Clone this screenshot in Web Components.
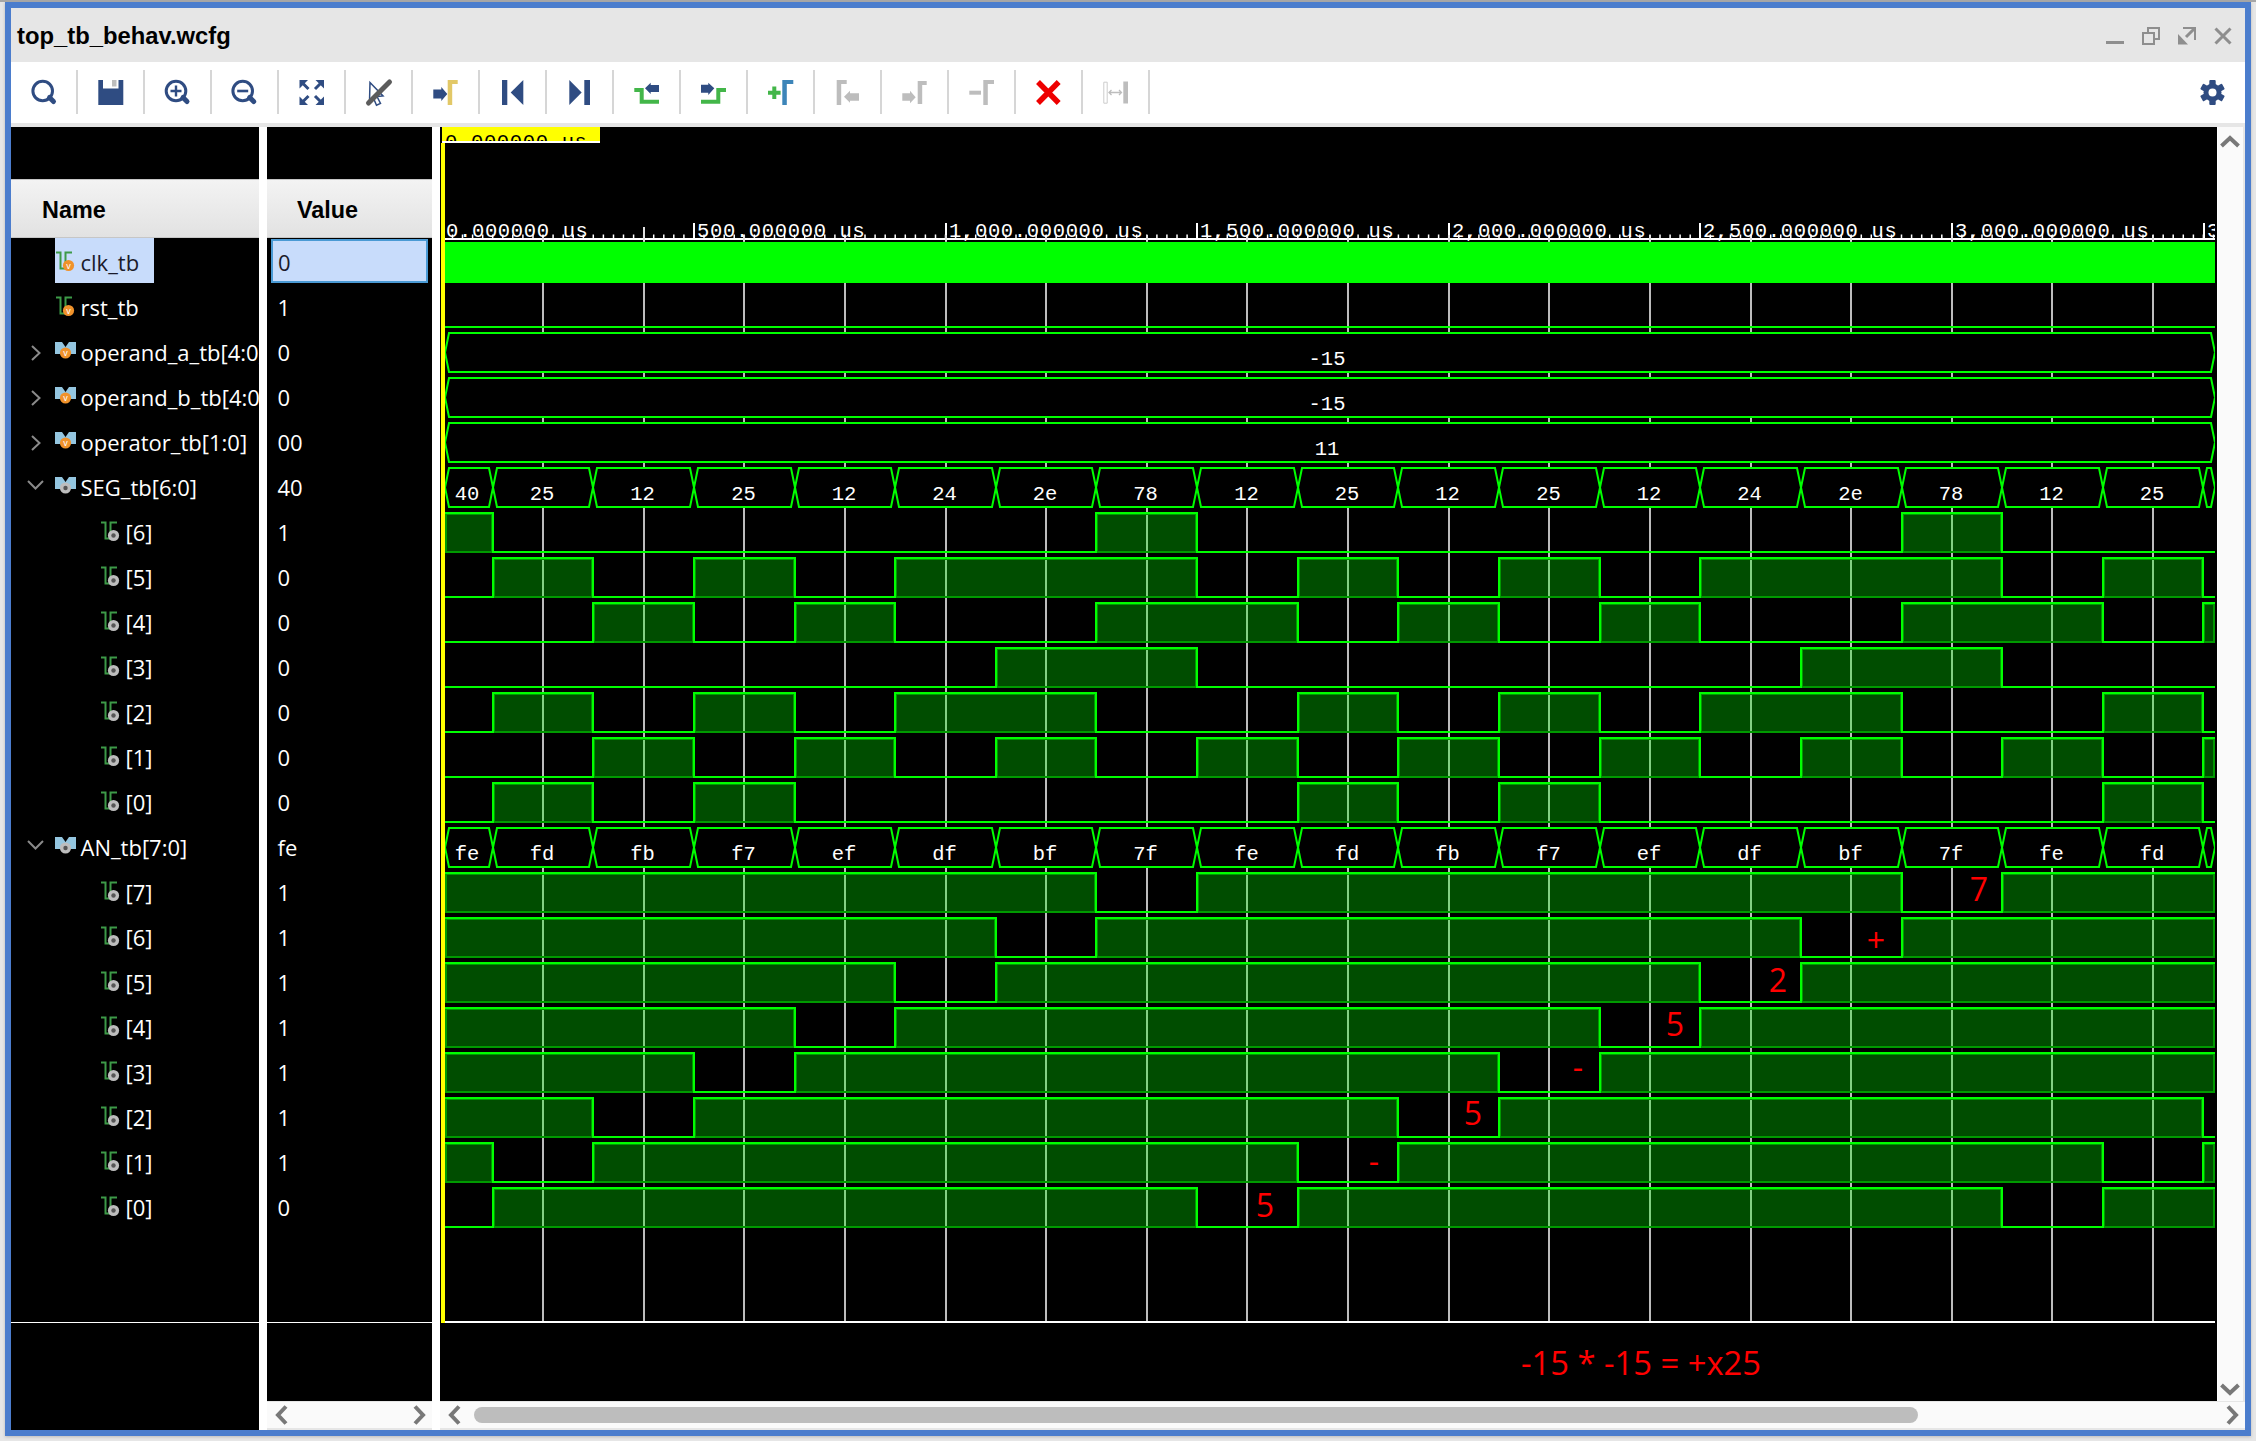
<!DOCTYPE html>
<html>
<head>
<meta charset="utf-8">
<title>top_tb_behav.wcfg</title>
<style>
    html, body { margin: 0; height: 1441px; overflow: hidden; }
    body { background: #e6e6e6; border-top: 2px solid #a6a6a6; box-sizing: border-box; }
</style>
</head>
<body>
<wave-window>
    <title-bar>top_tb_behav.wcfg</title-bar>
    <tool-bar></tool-bar>
    <wave-view>
        <name-panel></name-panel>
        <value-panel></value-panel>
        <wave-panel></wave-panel>
    </wave-view>
</wave-window>

<script>
//#region DATA
const NAVY = "#2f4c82"
const GREEN = "#43b649"
const GOLD = "#e2c867"
const BLUE = "#3d85b9"
const GREY = "#bdbdbd"

const gamma = (x, y, w, h, color) =>
    `<path d="M${x} ${y}h${w}v4h-${w - 4.500}v${h - 4}h-4.500z" fill="${color}"/>`

const TOOL_ICONS = [
    `<circle cx="32.700" cy="21" r="9.800" fill="none" stroke="${NAVY}" stroke-width="3"/><path d="M39.500 27.500l4 4" stroke="${NAVY}" stroke-width="5" stroke-linecap="round"/>`,
    `<path d="M21.300 10h25v25h-25z" fill="${NAVY}"/><path d="M26 10h15.500v8.500h-15.500z" fill="#fff"/><path d="M35 10h4.500v6.500h-4.500z" fill="${GREY}"/>`,
    `<circle cx="32" cy="21" r="9.800" fill="none" stroke="${NAVY}" stroke-width="3"/><path d="M39 27.500l4 4" stroke="${NAVY}" stroke-width="5" stroke-linecap="round"/><path d="M26.500 21h11M32 15.500v11" stroke="${NAVY}" stroke-width="2.400"/>`,
    `<circle cx="31.700" cy="21" r="9.800" fill="none" stroke="${NAVY}" stroke-width="3"/><path d="M38.700 27.500l4 4" stroke="${NAVY}" stroke-width="5" stroke-linecap="round"/><path d="M26.200 21h11" stroke="${NAVY}" stroke-width="2.600"/>`,
    `<g fill="${NAVY}"><path d="M21.500 10h8.500l-8.500 8.500z"/><path d="M46 10h-8.500l8.500 8.500z"/><path d="M21.500 35h8.500l-8.500-8.500z"/><path d="M46 35h-8.500l8.500-8.500z"/></g><path d="M24 12.500l6.500 6.500M43.500 12.500l-6.500 6.500M24 32.500l6.500-6.500M43.500 32.500l-6.500-6.500" stroke="${NAVY}" stroke-width="3"/>`,
    `<path d="M25 12.500l13 13.500-6 .5 3.500 7-4 1.800-3-7-4 3.500z" fill="#fff" stroke="${NAVY}" stroke-width="1.500"/><path d="M44.500 12l-21 21" stroke="#5c5c5c" stroke-width="5" stroke-linecap="round"/>`,
    `<path d="M21.300 19.500h8v-2.500l6 7-6 7v-2.500h-8z" fill="${NAVY}"/>` + gamma(35.700, 10, 10, 25, GOLD),
    `<path d="M23 10h5.300v25h-5.300z" fill="${NAVY}"/><path d="M44.300 10l-12.600 12.400 12.600 12.600z" fill="${NAVY}"/>`,
    `<path d="M23.300 10l12.400 12.400-12.400 12.600z" fill="${NAVY}"/><path d="M38.300 10h5.700v25h-5.700z" fill="${NAVY}"/>`,
    `<path d="M21.300 20h7.400v11.700h17.300" fill="none" stroke="${GREEN}" stroke-width="4"/><path d="M32 18.300l5.700-5.600v2.300h8.300v7h-8.300v2z" fill="${NAVY}"/>`,
    `<path d="M21 31.700h17.300v-11.700h7.700" fill="none" stroke="${GREEN}" stroke-width="4"/><path d="M21 14.700h7.300v-2l6 5.600-6 6.700v-2.300h-7.300z" fill="${NAVY}"/>`,
    `<path d="M27.300 16.500v12.500M21 22.700h12.600" stroke="${GREEN}" stroke-width="4"/>` + gamma(35.300, 10, 11, 25, BLUE),
    gamma(22.700, 10, 10, 25, GREY) + `<path d="M30 26.700l6-6v2.600h9v7.400h-9v2z" fill="${GREY}"/>`,
    `<path d="M21.300 23.300h7.700v-2.600l5.700 6.600-5.700 6v-2.600h-7.700z" fill="${GREY}"/>` + gamma(36.700, 11, 9, 23, GREY),
    `<path d="M21.300 20.700h11.700v4h-11.700z" fill="${GREY}"/>` + gamma(35.300, 10, 10.700, 25, GREY),
    `<path d="M23 12l20.700 21M43.700 12l-20.700 21" stroke="#ee0000" stroke-width="5.500"/>`,
    `<path d="M21.800 12.200h3.400v21h-3.400z" fill="none" stroke="#cccccc" stroke-width="1"/><path d="M41.300 11.500h4.700v22h-4.700z" fill="${GREY}"/><path d="M27 22.500h12.500M29.500 20l-2.500 2.500 2.500 2.500M37 20l2.500 2.500-2.500 2.500" fill="none" stroke="${GREY}" stroke-width="1.300"/>`
]

const SIGNALS = [
    { name: "clk_tb", kind: "wire", dot: "orange", depth: 0, value: "0", selected: true },
    { name: "rst_tb", kind: "wire", dot: "orange", depth: 0, value: "1" },
    { name: "operand_a_tb[4:0]", kind: "bus", dot: "orange", depth: 0, value: "0", arrow: "right" },
    { name: "operand_b_tb[4:0]", kind: "bus", dot: "orange", depth: 0, value: "0", arrow: "right" },
    { name: "operator_tb[1:0]", kind: "bus", dot: "orange", depth: 0, value: "00", arrow: "right" },
    { name: "SEG_tb[6:0]", kind: "bus", dot: "grey", depth: 0, value: "40", arrow: "down" },
    { name: "[6]", kind: "wire", dot: "grey", depth: 1, value: "1" },
    { name: "[5]", kind: "wire", dot: "grey", depth: 1, value: "0" },
    { name: "[4]", kind: "wire", dot: "grey", depth: 1, value: "0" },
    { name: "[3]", kind: "wire", dot: "grey", depth: 1, value: "0" },
    { name: "[2]", kind: "wire", dot: "grey", depth: 1, value: "0" },
    { name: "[1]", kind: "wire", dot: "grey", depth: 1, value: "0" },
    { name: "[0]", kind: "wire", dot: "grey", depth: 1, value: "0" },
    { name: "AN_tb[7:0]", kind: "bus", dot: "grey", depth: 0, value: "fe", arrow: "down" },
    { name: "[7]", kind: "wire", dot: "grey", depth: 1, value: "1" },
    { name: "[6]", kind: "wire", dot: "grey", depth: 1, value: "1" },
    { name: "[5]", kind: "wire", dot: "grey", depth: 1, value: "1" },
    { name: "[4]", kind: "wire", dot: "grey", depth: 1, value: "1" },
    { name: "[3]", kind: "wire", dot: "grey", depth: 1, value: "1" },
    { name: "[2]", kind: "wire", dot: "grey", depth: 1, value: "1" },
    { name: "[1]", kind: "wire", dot: "grey", depth: 1, value: "1" },
    { name: "[0]", kind: "wire", dot: "grey", depth: 1, value: "0" }
]

const SEG_VALUES = ["40", "25", "12", "25", "12", "24", "2e", "78", "12", "25", "12", "25", "12", "24", "2e", "78", "12", "25", "12"]
const AN_VALUES = ["fe", "fd", "fb", "f7", "ef", "df", "bf", "7f", "fe", "fd", "fb", "f7", "ef", "df", "bf", "7f", "fe", "fd", "fb"]
//#endregion DATA

//#region WINDOW
class WaveWindow extends HTMLElement {
    constructor() {
        super()
        this.attachShadow({ mode: "open" }).innerHTML = /*html*/`
            <style>
                :host {
                    display: flex;
                    flex-direction: column;
                    box-sizing: border-box;
                    width: 2246px;
                    height: 1434px;
                    margin-left: 5px;
                    border: 6px solid #4b7dcd;
                    background: #fff;
                    box-shadow: 0 1px 3px #bbb;
                }
            </style>
            <slot></slot>
        `
    }
}

class TitleBar extends HTMLElement {
    constructor() {
        super()
        this.attachShadow({ mode: "open" }).innerHTML = /*html*/`
            <style>
                :host {
                    display: flex;
                    flex: none;
                    align-items: center;
                    justify-content: space-between;
                    box-sizing: border-box;
                    height: 54px;
                    padding: 2px 13px 0 6px;
                    background: #e6e6e6;
                    color: #000;
                    font: bold 23.800px "Liberation Sans", sans-serif;
                }
                .buttons { display: flex; gap: 18px; }
                svg { display: block; width: 18px; height: 18px; }
                path { fill: none; stroke: #8e8e8e; stroke-width: 2; }
            </style>
            <slot></slot>
            <div class="buttons">
                <svg viewBox="0 0 18 18"><path d="M0 15.500h18" style="stroke-width:3"/></svg>
                <svg viewBox="0 0 18 18"><path d="M6 5V1h11v11h-4M1 6h11v11H1z"/></svg>
                <svg viewBox="0 0 18 18"><path d="M5 1h12v12"/><path d="M16 2L8 10" style="stroke-width:3"/><path d="M0 7l10 10.500H0z" style="fill:#8e8e8e;stroke:none"/></svg>
                <svg viewBox="0 0 18 18"><path d="M1.500 1.500l15 15M16.500 1.500l-15 15" style="stroke-width:3"/></svg>
            </div>
        `
    }
}

class ToolBar extends HTMLElement {
    constructor() {
        super()
        const buttons = TOOL_ICONS.map(icon => `<div class="btn"><svg viewBox="1 0 65 44" width="65" height="44">${icon}</svg></div>`).join("")
        this.attachShadow({ mode: "open" }).innerHTML = /*html*/`
            <style>
                :host {
                    display: flex;
                    flex: none;
                    height: 53px;
                    padding-top: 8px;
                    align-items: flex-start;
                    background: #fff;
                    border-bottom: 4px solid #e6e6e6;
                }
                .btn { width: 65px; height: 44px; border-right: 2px solid #d6d6d6; }
                svg { display: block; }
                .gear { margin: 10px 20px 0 auto; }
            </style>
            ${buttons}
            <svg class="gear" viewBox="-12.500 -12.500 25 25" width="25" height="25">
                <g fill="${NAVY}">
                    <circle r="9"/>
                    <rect x="-3.200" y="-12.500" width="6.400" height="25" rx="1"/>
                    <rect x="-3.200" y="-12.500" width="6.400" height="25" rx="1" transform="rotate(60)"/>
                    <rect x="-3.200" y="-12.500" width="6.400" height="25" rx="1" transform="rotate(120)"/>
                </g>
                <circle r="4" fill="#fff"/>
            </svg>
        `
    }
}

class WaveView extends HTMLElement {
    constructor() {
        super()
        this.attachShadow({ mode: "open" }).innerHTML = /*html*/`
            <style>
                :host {
                    display: flex;
                    flex: 1;
                    gap: 8px;
                    min-height: 0;
                    background: #fff;
                }
            </style>
            <slot></slot>
        `
    }
}
//#endregion WINDOW

//#region SIGNAL LIST
const panelStyle = /*css*/`
    :host {
        display: flex;
        flex-direction: column;
        flex: none;
        background: #000;
        color: #fff;
        font: 22px "Open Sans", sans-serif;
    }
    .head {
        flex: none;
        box-sizing: border-box;
        height: 59px;
        margin-top: 52px;
        padding-top: 3px;
        display: flex;
        align-items: center;
        background: linear-gradient(#f3f3f3, #e2e2e2);
        border-top: 1px solid #c6c6c6;
        border-bottom: 1px solid #c6c6c6;
        color: #000;
        font: bold 23.400px "Liberation Sans", sans-serif;
    }
    .rows { flex: none; }
    .spacer { flex: none; height: 94px; }
    .line { flex: none; height: 1px; background: #fff; }
    .rest { flex: 1; }
`

class SigIcon extends HTMLElement {
    constructor() {
        super()
        this.attachShadow({ mode: "open" })
    }

    connectedCallback() {
        const orange = this.getAttribute("dot") === "orange"
        const bus = this.getAttribute("kind") === "bus"
        const cx = bus ? 10.500 : 13.500
        const cy = bus ? 11 : 14.500
        const dot = orange
            ? `<circle cx="${cx}" cy="${cy}" r="5.600" fill="#f0922b"/><text x="${cx}" y="${cy + 3}" font-family="'Liberation Sans', sans-serif" font-size="9" fill="#fff" text-anchor="middle">v</text>`
            : `<circle cx="${cx}" cy="${cy}" r="5.600" fill="#bdbdbd"/><circle cx="${cx}" cy="${cy}" r="2.200" fill="#555"/>`
        const shape = bus
            ? `<path d="M0 0h7l3.500 5 3.500-5h7v12h-5l-5.500-4-5.500 4h-5z" fill="#94c6e0"/>`
            : `<path d="M1 1.500h4.500v16h5v-16h6.500" fill="none" stroke="#3d9a48" stroke-width="2"/>`
        this.shadowRoot.innerHTML = /*html*/`
            <style>
                :host { display: block; flex: none; width: 25.500px; }
                svg { display: block; overflow: visible; }
            </style>
            <svg width="21" height="${bus ? 17 : 20}">${shape}${dot}</svg>
        `
    }
}

class NamePanel extends HTMLElement {
    constructor() {
        super()
        const chevrons = {
            right: `<svg class="chev" style="left:20px" width="10" height="16" viewBox="0 0 10 16"><path d="M1 1l7.500 7-7.500 7" fill="none" stroke="#8a8a8a" stroke-width="2"/></svg>`,
            down: `<svg class="chev" style="left:16px" width="17" height="10" viewBox="0 0 17 10"><path d="M1 1l7.500 7.500 7.500-7.500" fill="none" stroke="#8a8a8a" stroke-width="2"/></svg>`
        }
        const rows = SIGNALS.map(s => /*html*/`
            <div class="row">
                <div class="indent" style="width:${44 + s.depth * 45}px">${s.arrow ? chevrons[s.arrow] : ""}</div>
                <div class="label ${s.selected ? "sel" : ""}">
                    <sig-icon kind="${s.kind}" dot="${s.dot}" style="margin-top:${s.kind === "bus" ? -3 : -1}px"></sig-icon>
                    <span>${s.name}</span>
                </div>
            </div>`).join("")
        this.attachShadow({ mode: "open" }).innerHTML = /*html*/`
            <style>
                ${panelStyle}
                :host { width: 248px; overflow: hidden; }
                .head { padding-left: 31px; }
                .row { display: flex; height: 45px; white-space: nowrap; }
                .indent { position: relative; flex: none; }
                .chev { position: absolute; top: 17px; }
                .label { display: flex; align-items: center; padding-top: 2px; box-sizing: border-box; }
                .label.sel { background: #c8dcfb; color: #1a1a2a; padding-right: 15px; }
            </style>
            <div class="head">Name</div>
            <div class="rows">${rows}</div>
            <div class="spacer"></div>
            <div class="line"></div>
            <div class="rest"></div>
        `
    }
}

class ValuePanel extends HTMLElement {
    constructor() {
        super()
        const rows = SIGNALS.map(s => `<div class="row ${s.selected ? "sel" : ""}"><span>${s.value}</span></div>`).join("")
        this.attachShadow({ mode: "open" }).innerHTML = /*html*/`
            <style>
                ${panelStyle}
                :host { width: 165px; }
                .head { padding-left: 30px; }
                .row { display: flex; align-items: center; height: 45px; padding: 2px 0 0 10.500px; box-sizing: border-box; }
                .row.sel {
                    margin: 1px 4px 0 4px;
                    height: 44px;
                    padding-left: 5px;
                    background: #c8dcfb;
                    border: 2px solid #4a9ad4;
                    color: #1a1a2a;
                }
                h-scroll { flex: none; background: #fafafa; }
            </style>
            <div class="head">Value</div>
            <div class="rows">${rows}</div>
            <div class="spacer"></div>
            <div class="line"></div>
            <div class="rest"></div>
            <h-scroll left="8" right="6"></h-scroll>
        `
    }
}
//#endregion SIGNAL LIST

//#region SCROLLBARS
class HScroll extends HTMLElement {
    constructor() {
        super()
        this.attachShadow({ mode: "open" })
    }

    connectedCallback() {
        const left = this.getAttribute("left")
        const right = this.getAttribute("right")
        const thumb = this.getAttribute("thumb")
        this.shadowRoot.innerHTML = /*html*/`
            <style>
                :host {
                    display: flex;
                    align-items: center;
                    box-sizing: border-box;
                    height: 29px;
                    padding: 0 ${right}px 0 ${left}px;
                    background: #fafafa;
                    border-top: 1px solid #e6e6e6;
                    border-bottom: 2px solid #e6e6e6;
                }
                svg { display: block; flex: none; }
                .thumb { height: 16px; margin-left: 13px; background: #bdbdbd; border-radius: 8px; }
                .fill { flex: 1; }
            </style>
            <svg width="13" height="20" viewBox="0 0 13 20"><path d="M11 1.500L3 10l8 8.500" fill="none" stroke="#787878" stroke-width="4"/></svg>
            ${thumb ? `<div class="thumb" style="width:${thumb}px"></div>` : ""}
            <div class="fill"></div>
            <svg width="13" height="20" viewBox="0 0 13 20"><path d="M2 1.500L10 10l-8 8.500" fill="none" stroke="#787878" stroke-width="4"/></svg>
        `
    }
}

class VScroll extends HTMLElement {
    constructor() {
        super()
        this.attachShadow({ mode: "open" }).innerHTML = /*html*/`
            <style>
                :host {
                    display: flex;
                    flex: none;
                    flex-direction: column;
                    justify-content: space-between;
                    align-items: center;
                    box-sizing: border-box;
                    width: 28px;
                    padding: 8px 3px 5px 2px;
                    background: #fafafa;
                    border-left: 1px solid #fff;
                    border-right: 2px solid #e6e6e6;
                }
                svg { display: block; }
            </style>
            <svg width="20" height="13" viewBox="0 0 20 13"><path d="M1.500 11L10 3l8.500 8" fill="none" stroke="#787878" stroke-width="4"/></svg>
            <svg width="20" height="13" viewBox="0 0 20 13"><path d="M1.500 2L10 10l8.500-8" fill="none" stroke="#787878" stroke-width="4"/></svg>
        `
    }
}
//#endregion SCROLLBARS

//#region WAVES
const LEFT = 445
const RIGHT = 2215
const edge = n => Math.round(492.7 + 100.63 * n)
const segment = n => [n === 0 ? LEFT : edge(n - 1), n === 18 ? RIGHT : edge(n)]
const low = row => 282 + 45 * row

function gridLines() {
    let out = ""
    for (let k = 1; k <= 17; k++) {
        const x = Math.round(442.4 + 100.63 * k)
        out += `<path d="M${x} 240V1321" stroke="#bcbcbc" stroke-width="2"/>`
    }
    return out
}

function timeline() {
    let dots = ""
    for (let x = 442.4; x < RIGHT; x += 10.063) dots += `M${x.toFixed(1)} 234.500V238`
    let majors = ""
    const labels = ["0.000000 us", "500.000000 us", "1,000.000000 us", "1,500.000000 us", "2,000.000000 us", "2,500.000000 us", "3,000.000000 us", "3,500.000000 us"]
    const texts = labels.map((label, k) => {
        const x = Math.round(442.4 + 251.6 * k)
        if (k > 0) majors += `M${x} 223V238`
        return `<text class="mono time" x="${k === 0 ? 446 : x + 3}" y="237">${label}</text>`
    }).join("")
    let grid = ""
    for (let k = 1; k <= 17; k++) grid += `M${Math.round(442.4 + 100.63 * k)} 235V241`
    return /*svg*/`
        <path d="M${LEFT} 239H${RIGHT}" stroke="#fff" stroke-width="2"/>
        <path d="${dots}" stroke="#fff" stroke-width="1.500"/>
        <path d="${majors}" stroke="#fff" stroke-width="2"/>
        <path d="${grid}M644 227V241" stroke="#e0e0e0" stroke-width="2"/>
        ${texts}
    `
}

// one bit of a bus, the level of each segment taken from the hex value
function digitalRow(row, values, bit) {
    const bottom = low(row)
    const top = bottom - 39
    let line = ""
    let blocks = ""
    let start = null
    values.forEach((hex, n) => {
        const [a, b] = segment(n)
        const y = (parseInt(hex, 16) >> bit) & 1 ? top : bottom
        line += (line ? "L" : "M") + `${a} ${y}L${b} ${y}`
        if (y === top && start === null) start = a
        const next = n + 1 < values.length ? (parseInt(values[n + 1], 16) >> bit) & 1 : 0
        if (y === top && !next) {
            blocks += `<rect x="${start + 1}" y="${top + 1}" width="${b - start - 2}" height="${bottom - top - 1}" fill="#00ff00" fill-opacity=".3" stroke="#009a00" stroke-width="2"/>`
            start = null
        }
    })
    return blocks + `<path d="${line}" fill="none" stroke="#00ff00" stroke-width="2"/>`
}

function busSegment(row, a, b, label, cx) {
    const bottom = low(row)
    const top = bottom - 39
    const mid = bottom - 19.500
    const shape = `<path d="M${a + 4} ${top}H${b - 4}L${b} ${mid}L${b - 4} ${bottom}H${a + 4}L${a} ${mid}z" stroke="#00ff00" stroke-width="2"/>`
    const text = label ? `<text class="mono value" x="${cx}" y="${bottom - 7}" text-anchor="middle">${label}</text>` : ""
    return shape + text
}

function busValues(row, values) {
    return values.map((hex, n) => {
        const [a, b] = segment(n)
        return busSegment(row, a, b, n === 18 ? "" : hex, (a + b) / 2 - (n === 0 ? 2 : 1))
    }).join("")
}

function red(x, y, label) {
    return `<text class="note" x="${x}" y="${y}" text-anchor="middle">${label}</text>`
}

class WavePanel extends HTMLElement {
    constructor() {
        super()
        let rows = `<rect x="${LEFT}" y="242" width="${RIGHT - LEFT}" height="41" fill="#00ff00"/>`
        rows += `<path d="M${LEFT} ${low(1)}H${RIGHT}" stroke="#00ff00" stroke-width="2"/>`
        rows += busSegment(2, LEFT, RIGHT, "-15", 1327)
        rows += busSegment(3, LEFT, RIGHT, "-15", 1327)
        rows += busSegment(4, LEFT, RIGHT, "11", 1327)
        rows += busValues(5, SEG_VALUES)
        for (let bit = 6; bit >= 0; bit--) rows += digitalRow(12 - bit, SEG_VALUES, bit)
        rows += busValues(13, AN_VALUES)
        for (let bit = 7; bit >= 0; bit--) rows += digitalRow(21 - bit, AN_VALUES, bit)

        this.attachShadow({ mode: "open" }).innerHTML = /*html*/`
            <style>
                :host { display: flex; flex-direction: column; flex: 1; min-width: 0; }
                .top { display: flex; flex: 1; min-height: 0; }
                svg.wave { display: block; flex: none; background: #000; }
                .mono { font-family: "Liberation Mono", monospace; fill: #fff; }
                .time { font-size: 20.500px; letter-spacing: .66px; }
                .value { font-size: 20.500px; }
                .flag { font-size: 20.500px; letter-spacing: .66px; fill: #000; }
                .note { font-family: "Open Sans", sans-serif; font-size: 32px; fill: #ff0000; }
            </style>
            <div class="top">
                <svg class="wave" viewBox="440 127 1777 1274" width="1777" height="1274">
                    <defs>
                        <clipPath id="flag"><rect x="442" y="127" width="158" height="14"/></clipPath>
                        <clipPath id="area"><rect x="440" y="127" width="${RIGHT - 440}" height="1274"/></clipPath>
                    </defs>
                    ${gridLines()}
                    <g clip-path="url(#area)">
                        ${timeline()}
                        ${rows}
                    </g>
                    <path d="M445 1322H${RIGHT}" stroke="#fff" stroke-width="2"/>
                    <rect x="442" y="127" width="158" height="14" fill="#ffff00"/>
                    <text class="mono flag" x="445" y="148" clip-path="url(#flag)">0.000000 us</text>
                    <path d="M442 142H600" stroke="#fff" stroke-width="2"/>
                    <rect x="441" y="143" width="4" height="1180" fill="#ffff00"/>
                    ${red(1979, 901, "7")}
                    ${red(1876, 952, "+")}
                    ${red(1778, 992, "2")}
                    ${red(1675, 1036, "5")}
                    ${red(1578, 1079, "-")}
                    ${red(1473, 1125, "5")}
                    ${red(1374, 1173, "-")}
                    ${red(1265, 1217, "5")}
                    <text class="note" x="1521" y="1375" textLength="240" lengthAdjust="spacingAndGlyphs">-15 * -15 = +x25</text>
                </svg>
                <v-scroll></v-scroll>
            </div>
            <h-scroll left="8" right="6" thumb="1444"></h-scroll>
        `
    }
}
//#endregion WAVES

customElements.define("wave-window", WaveWindow)
customElements.define("title-bar", TitleBar)
customElements.define("tool-bar", ToolBar)
customElements.define("wave-view", WaveView)
customElements.define("sig-icon", SigIcon)
customElements.define("name-panel", NamePanel)
customElements.define("value-panel", ValuePanel)
customElements.define("h-scroll", HScroll)
customElements.define("v-scroll", VScroll)
customElements.define("wave-panel", WavePanel)
</script>
</body>
</html>
